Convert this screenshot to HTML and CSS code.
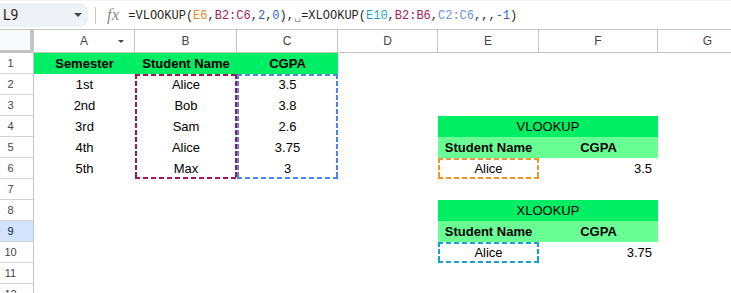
FILE: index.html
```html
<!DOCTYPE html>
<html lang="en">
<head>
  <meta charset="UTF-8" />
  <meta name="viewport" content="width=device-width, initial-scale=1.0" />
  <title>VLOOKUP vs XLOOKUP</title>
  <link rel="stylesheet" href="styles.css">
</head>
<body>
  <div class="formula-bar">
    <div class="name-box"><span>L9</span><span class="caret"></span></div>
    <div class="divider"></div>
    <span class="fx">fx</span>
    <div class="formula">=VLOOKUP(<span class="r-orange">E6</span>,<span class="r-crimson">B2:C6</span>,<span class="n">2</span>,<span class="n">0</span>),<span class="sp">␣</span>=XLOOKUP(<span class="r-teal">E10</span>,<span class="r-crimson">B2:B6</span>,<span class="r-blue">C2:C6</span>,,,<span class="n">-1</span>)</div>
  </div>

  <div class="sheet">
    <!-- column headers -->
    <div class="corner"></div>
    <div class="ch filter"><span></span><span>A</span><span class="caret"></span></div>
    <div class="ch">B</div>
    <div class="ch">C</div>
    <div class="ch">D</div>
    <div class="ch">E</div>
    <div class="ch">F</div>
    <div class="ch">G</div>

    <!-- row 1 -->
    <div class="rh">1</div>
    <div class="c hd">Semester</div>
    <div class="c hd">Student Name</div>
    <div class="c hd">CGPA</div>
    <div class="c"></div><div class="c"></div><div class="c"></div><div class="c"></div>

    <!-- row 2 -->
    <div class="rh">2</div>
    <div class="c">1st</div>
    <div class="c rng crimson top">Alice</div>
    <div class="c rng blue top">3.5</div>
    <div class="c"></div><div class="c"></div><div class="c"></div><div class="c"></div>

    <!-- row 3 -->
    <div class="rh">3</div>
    <div class="c">2nd</div>
    <div class="c rng crimson">Bob</div>
    <div class="c rng blue">3.8</div>
    <div class="c"></div><div class="c"></div><div class="c"></div><div class="c"></div>

    <!-- row 4 -->
    <div class="rh">4</div>
    <div class="c">3rd</div>
    <div class="c rng crimson">Sam</div>
    <div class="c rng blue">2.6</div>
    <div class="c"></div>
    <div class="c title">VLOOKUP</div>
    <div class="c"></div>

    <!-- row 5 -->
    <div class="rh">5</div>
    <div class="c">4th</div>
    <div class="c rng crimson">Alice</div>
    <div class="c rng blue">3.75</div>
    <div class="c"></div>
    <div class="c sub">Student Name</div>
    <div class="c sub">CGPA</div>
    <div class="c"></div>

    <!-- row 6 -->
    <div class="rh">6</div>
    <div class="c">5th</div>
    <div class="c rng crimson bot">Max</div>
    <div class="c rng blue bot">3</div>
    <div class="c"></div>
    <div class="c rng orange top bot">Alice</div>
    <div class="c num">3.5</div>
    <div class="c"></div>

    <!-- row 7 -->
    <div class="rh">7</div>
    <div class="c"></div><div class="c"></div><div class="c"></div><div class="c"></div><div class="c"></div><div class="c"></div><div class="c"></div>

    <!-- row 8 -->
    <div class="rh">8</div>
    <div class="c"></div><div class="c"></div><div class="c"></div><div class="c"></div>
    <div class="c title">XLOOKUP</div>
    <div class="c"></div>

    <!-- row 9 -->
    <div class="rh sel">9</div>
    <div class="c"></div><div class="c"></div><div class="c"></div><div class="c"></div>
    <div class="c sub">Student Name</div>
    <div class="c sub">CGPA</div>
    <div class="c"></div>

    <!-- row 10 -->
    <div class="rh">10</div>
    <div class="c"></div><div class="c"></div><div class="c"></div><div class="c"></div>
    <div class="c rng teal top bot">Alice</div>
    <div class="c num">3.75</div>
    <div class="c"></div>

    <!-- row 11 -->
    <div class="rh">11</div>
    <div class="c"></div><div class="c"></div><div class="c"></div><div class="c"></div><div class="c"></div><div class="c"></div><div class="c"></div>

    <!-- row 12 -->
    <div class="rh">12</div>
    <div class="c"></div><div class="c"></div><div class="c"></div><div class="c"></div><div class="c"></div><div class="c"></div><div class="c"></div>
  </div>
</body>
</html>
```

FILE: styles.css
```css
:root {
  --grid-line: #c4c4c4;
  --head-text: #444746;
  --green: #00ee63;
  --green-light: #69ff94;
}
body {
  margin: 0;
  font-family: "Liberation Sans", Arial, sans-serif;
  color: #000;
  background: #fff;
  overflow: hidden;
}

/* formula bar */
.formula-bar {
  display: flex;
  align-items: center;
  height: 30px;
  border-bottom: 1px solid #c7c7c7;
  border-top: 1px solid #f1f3f4;
  box-sizing: border-box;
}
.name-box {
  display: flex;
  align-items: center;
  width: 88px;
  height: 24px;
  box-sizing: border-box;
  padding-left: 3px;
  background: #eef1f5;
  border-radius: 0 8px 8px 0;
  font-family: Roboto, "Liberation Sans", sans-serif;
  font-size: 14px;
  color: #1f1f1f;
}
.caret {
  width: 0;
  height: 0;
  border-left: 4px solid transparent;
  border-right: 4px solid transparent;
  border-top: 4px solid #444746;
}
.name-box .caret {
  margin-left: auto;
  margin-right: 6px;
}
.divider {
  width: 1px;
  height: 17px;
  margin-left: 7px;
  background: #c4c7c5;
}
.fx {
  margin-left: 11px;
  font-family: "Liberation Serif", serif;
  font-style: italic;
  font-size: 17px;
  color: #8a8d90;
}
.formula {
  margin-left: 9px;
  font-family: "Liberation Mono", "DejaVu Sans Mono", monospace;
  font-size: 12px;
  color: #1f1f1f;
  white-space: nowrap;
}
.formula .r-orange { color: #ee8a2c; }
.formula .r-crimson { color: #a3245a; }
.formula .r-teal { color: #1a9fcf; }
.formula .r-blue { color: #6a92ee; }
.formula .n { color: #2f5fcc; }
.formula .sp { color: #9aa0a6; font-family: "DejaVu Sans Mono", monospace; }

/* sheet grid */
.sheet {
  display: grid;
  grid-template-columns: 34px 101px 102px 101px 100px 101px 119px 100px;
  grid-template-rows: 23px;
  grid-auto-rows: 21px;
  font-size: 13px;
}
.corner {
  background: #f8f9fa;
  border-right: 4px solid var(--grid-line);
  border-bottom: 3px solid var(--grid-line);
}
.ch {
  border-right: 1px solid var(--grid-line);
  border-bottom: 1px solid var(--grid-line);
  text-align: center;
  line-height: 22px;
  font-size: 12px;
  color: var(--head-text);
}
.ch.filter {
  display: grid;
  grid-template-columns: 1fr auto 1fr;
  align-items: center;
}
.ch.filter .caret {
  justify-self: end;
  margin-right: 10px;
  border-left-width: 3.5px;
  border-right-width: 3.5px;
  border-top-width: 3.5px;
}
.rh {
  border-right: 1px solid var(--grid-line);
  border-bottom: 1px solid #d4d4d4;
  padding-right: 12px;
  text-align: center;
  font-size: 11px;
  line-height: 20px;
  color: var(--head-text);
}
.rh.sel {
  background: #d3e3fd;
  color: #041e49;
}
.c {
  line-height: 21px;
  text-align: center;
  white-space: nowrap;
  overflow: hidden;
}
.hd {
  background: var(--green);
  font-weight: bold;
}
.title {
  grid-column: span 2;
  background: var(--green);
}
.sub {
  background: var(--green-light);
  font-weight: bold;
}
.num {
  text-align: right;
  padding-right: 6px;
}

/* dashed range highlights */
.rng {
  --rc: #a3164f;
  background:
    repeating-linear-gradient(90deg, var(--rc) 0 5px, transparent 5px 8px) top / 100% var(--t, 0) no-repeat,
    repeating-linear-gradient(90deg, var(--rc) 0 5px, transparent 5px 8px) bottom / 100% var(--b, 0) no-repeat,
    repeating-linear-gradient(180deg, var(--rc) 0 5px, transparent 5px 7px) left / 2px 100% no-repeat,
    repeating-linear-gradient(180deg, var(--rc) 0 5px, transparent 5px 7px) right / 2px 100% no-repeat;
}
.rng.top { --t: 2px; }
.rng.bot { --b: 2px; }
.rng.crimson { --rc: #a3164f; }
.rng.blue { --rc: #4a86e8; }
.rng.orange { --rc: #f4952a; }
.rng.teal { --rc: #17a2d2; }
```
